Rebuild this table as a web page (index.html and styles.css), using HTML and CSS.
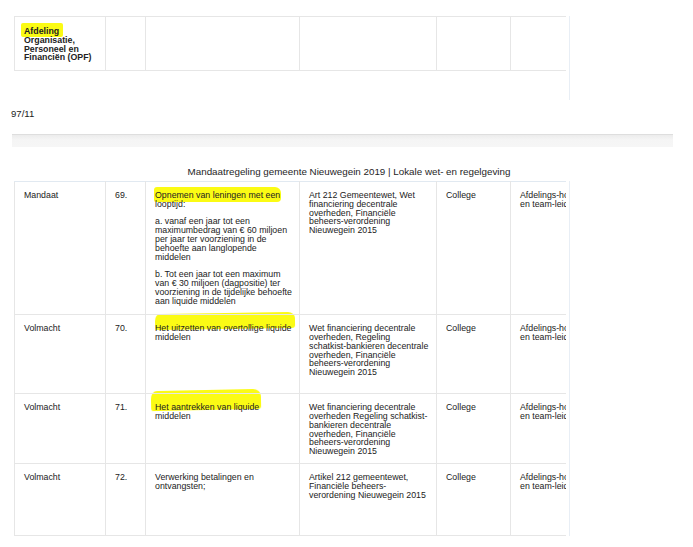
FILE: index.html
```html
<!DOCTYPE html>
<html lang="nl">
<head>
<meta charset="utf-8">
<title>Mandaatregeling gemeente Nieuwegein 2019</title>
<link rel="stylesheet" href="styles.css">
</head>
<body>
<div class="sheet sheet-top">
  <div class="clip">
    <table class="grid">
      <colgroup>
        <col class="c1"><col class="c2"><col class="c3"><col class="c4"><col class="c5"><col class="c6">
      </colgroup>
      <tr class="row-top">
        <td class="dept"><span class="hl hl-afd">Afdeling</span><br>Organisatie,<br>Personeel en<br>Financiën (OPF)</td>
        <td></td><td></td><td></td><td></td><td></td>
      </tr>
    </table>
  </div>
</div>

<div class="ref">97/11</div>

<div class="band"></div>

<div class="title">Mandaatregeling gemeente Nieuwegein 2019 | Lokale wet- en regelgeving</div>

<div class="sheet sheet-main">
  <div class="clip">
    <table class="grid main">
      <colgroup>
        <col class="c1"><col class="c2"><col class="c3"><col class="c4"><col class="c5"><col class="c6">
      </colgroup>
      <tr class="row-69">
        <td>Mandaat</td>
        <td>69.</td>
        <td>
          <p><span class="hl hl-69">Opnemen van leningen met een</span><br>looptijd:</p>
          <p>a. vanaf een jaar tot een<br>maximumbedrag van € 60 miljoen<br>per jaar ter voorziening in de<br>behoefte aan langlopende<br>middelen</p>
          <p>b. Tot een jaar tot een maximum<br>van € 30 miljoen (dagpositie) ter<br>voorziening in de tijdelijke behoefte<br>aan liquide middelen</p>
        </td>
        <td>Art 212 Gemeentewet, Wet<br>financiering decentrale<br>overheden, Financiële<br>beheers-verordening<br>Nieuwegein 2015</td>
        <td>College</td>
        <td class="cut">Afdelings-hoofden<br>en team-leiders</td>
      </tr>
      <tr class="row-70">
        <td>Volmacht</td>
        <td>70.</td>
        <td><span class="hl hl-70">Het uitzetten van overtollige liquide</span><br>middelen</td>
        <td>Wet financiering decentrale<br>overheden, Regeling<br>schatkist-bankieren decentrale<br>overheden, Financiële<br>beheers-verordening<br>Nieuwegein 2015</td>
        <td>College</td>
        <td class="cut">Afdelings-hoofden<br>en team-leiders</td>
      </tr>
      <tr class="row-71">
        <td>Volmacht</td>
        <td>71.</td>
        <td><span class="hl hl-71">Het aantrekken van liquide</span><br>middelen</td>
        <td>Wet financiering decentrale<br>overheden Regeling schatkist-<br>bankieren decentrale<br>overheden, Financiële<br>beheers-verordening<br>Nieuwegein 2015</td>
        <td>College</td>
        <td class="cut">Afdelings-hoofden<br>en team-leiders</td>
      </tr>
      <tr class="row-72">
        <td>Volmacht</td>
        <td>72.</td>
        <td>Verwerking betalingen en<br>ontvangsten;</td>
        <td>Artikel 212 gemeentewet,<br>Financiële beheers-<br>verordening Nieuwegein 2015</td>
        <td>College</td>
        <td class="cut">Afdelings-hoofden<br>en team-leiders</td>
      </tr>
    </table>
  </div>
</div>
</body>
</html>
```
FILE: styles.css
```css
body {
  margin: 0;
  font-family: "Liberation Sans", Arial, sans-serif;
  color: #222;
  background: #fff;
}

.sheet {
  margin-left: 12px;
  width: 555px;
  padding-left: 2px;
  border-right: 1px solid #e8eef5;
}

.sheet-top {
  margin-top: 16px;
  height: 84px;
}

.clip {
  width: 552px;
  overflow: hidden;
  isolation: isolate;
}

.grid {
  border-collapse: collapse;
  table-layout: fixed;
  width: 616px;
  font-size: 8.8px;
  line-height: 8.8px;
}

.c1 { width: 91px; }
.c2 { width: 40px; }
.c3 { width: 154px; }
.c4 { width: 137px; }
.c5 { width: 74px; }
.c6 { width: 120px; }

.grid td {
  border: 1px solid #e6e6e6;
  vertical-align: top;
  padding: 9px 4px 0 9px;
  white-space: nowrap;
}

.main tr:first-child td {
  border-top-color: #e1e9f1;
}

.grid p {
  margin: 0 0 8.8px;
}

.row-top { height: 54px; }
.row-top td { padding-top: 10px; }
.dept { font-weight: bold; }

.row-69 { height: 132px; }
.row-70 { height: 79px; }
.row-71 { height: 70px; }
.row-72 { height: 72px; }

.hl {
  position: relative;
}

.hl::before {
  content: "";
  position: absolute;
  z-index: -1;
  background: #fbfb14;
  filter: blur(0.5px);
}

.hl-afd::before {
  top: -3px;
  bottom: -1px;
  left: -3px;
  right: -4px;
  border-radius: 2px;
}

.hl-69::before {
  top: -3px;
  bottom: -2px;
  left: -1px;
  right: -1px;
  border-radius: 3px 6px 4px 2px;
}

.hl-70::before {
  top: -10px;
  bottom: 4px;
  left: 0;
  right: -4px;
  border-radius: 5px 7px 3px 2px / 7px 6px 3px 3px;
  transform: rotate(-0.9deg);
}

.hl-71::before {
  top: -12px;
  bottom: 2px;
  left: -4px;
  right: -2px;
  border-radius: 6px 8px 3px 2px / 8px 7px 3px 3px;
  transform: rotate(-1.2deg);
}

.ref {
  margin-top: 8px;
  padding-left: 11px;
  font-size: 9.6px;
  line-height: 12px;
  color: #222;
}

.band {
  margin-top: 14px;
  margin-left: 12px;
  width: 661px;
  height: 12px;
  border-top: 1px solid #dedede;
  background: linear-gradient(#ececec, #f5f5f5 40%, #f6f6f6);
}

.title {
  margin-top: 19px;
  text-align: center;
  padding-left: 5px;
  font-size: 9.8px;
  line-height: 12px;
  color: #1e1e1e;
}

.sheet-main {
  margin-top: 3px;
}
```
